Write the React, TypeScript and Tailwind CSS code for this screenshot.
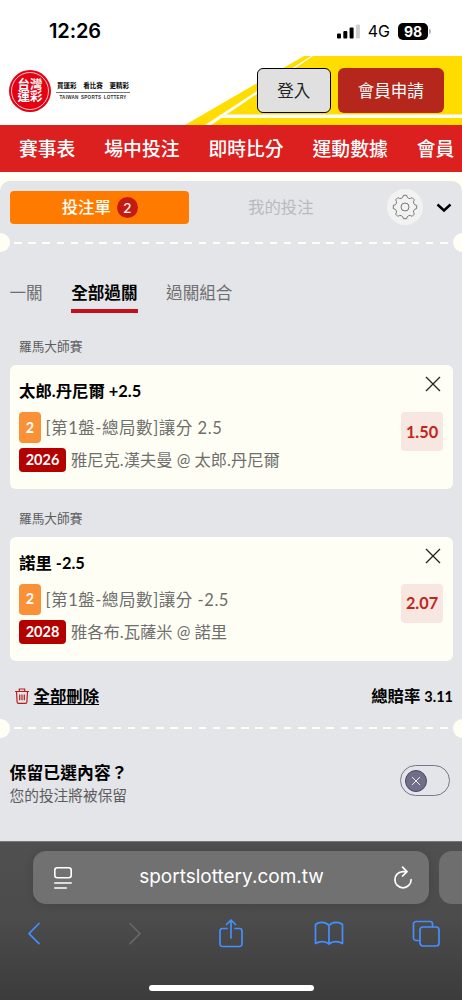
import type { ReactNode } from 'react'

type Bet = {
  league: string
  title: string
  count: string
  market: string
  code: string
  match: string
  odds: string
}

const NAV_ITEMS = ['賽事表', '場中投注', '即時比分', '運動數據', '會員']

const BETS: Bet[] = [
  {
    league: '羅馬大師賽',
    title: '太郎.丹尼爾 +2.5',
    count: '2',
    market: '[第1盤-總局數]讓分 2.5',
    code: '2026',
    match: '雅尼克.漢夫曼 @ 太郎.丹尼爾',
    odds: '1.50',
  },
  {
    league: '羅馬大師賽',
    title: '諾里 -2.5',
    count: '2',
    market: '[第1盤-總局數]讓分 -2.5',
    code: '2028',
    match: '雅各布.瓦薩米 @ 諾里',
    odds: '2.07',
  },
]

function StatusBar() {
  return (
    <div className="flex h-14 items-start justify-between bg-white pl-[49px] pr-[31px] pt-[19px] font-['Inter'] text-black">
      <span className="text-[20px] font-semibold leading-6 tracking-[-0.1px]">12:26</span>
      <div className="flex h-6 items-center">
        <svg width="24" height="15" viewBox="0 0 24 15">
          <rect x="0" y="9.5" width="4" height="5" rx="1" />
          <rect x="6.3" y="7" width="4" height="7.5" rx="1" />
          <rect x="12.6" y="3.5" width="4" height="11" rx="1" />
          <rect x="18.9" y="0.5" width="4" height="14" rx="1" fill="#cfcfcf" />
        </svg>
        <span className="ml-[7px] text-[16px] leading-6">4G</span>
        <span className="ml-[8px] flex h-[17px] w-[30px] items-center justify-center rounded-[5px] bg-black text-[14px] font-bold text-white">
          98
        </span>
        <span className="ml-px h-[5px] w-[2px] rounded-r-full bg-[#b5b5b5]" />
      </div>
    </div>
  )
}

function Logo() {
  return (
    <div className="flex items-center">
      <div className="flex size-[42px] items-center justify-center rounded-full bg-[#e60012]">
        <div className="flex size-[38px] items-center justify-center rounded-full border border-white/80">
          <span className="w-[26px] text-center text-[12.5px] font-bold leading-[12.5px] text-white">
            台灣
            <br />
            運彩
          </span>
        </div>
      </div>
      <div className="ml-[5px] w-[74px]">
        <div className="flex justify-between whitespace-nowrap px-px text-[6.5px] font-bold leading-[10px] text-black">
          <span>買運彩</span>
          <span>看比賽</span>
          <span>更精彩</span>
        </div>
        <div className="mt-px border-t border-[#777] pt-px text-center font-['Liberation_Sans'] text-[4.6px] font-bold leading-[7px] tracking-[0.22px] whitespace-nowrap text-[#333] [word-spacing:1px]">
          TAIWAN SPORTS LOTTERY
        </div>
      </div>
    </div>
  )
}

function Header() {
  return (
    <header className="relative flex h-[69px] items-start justify-between bg-white pl-[9px] pr-[18px] pt-[12px]">
      <svg className="absolute inset-0" width="462" height="69" viewBox="0 0 462 69">
        <path d="M304 0H462V69H185Z" fill="#ffdd00" />
        <path d="M311 0h2L211 69h-6Z" fill="#fff" />
        <path d="M227 58.5H462V62H221Z" fill="#fff" />
      </svg>
      <div className="relative mt-[2px]">
        <Logo />
      </div>
      <div className="relative flex gap-[7px] text-[16.5px]">
        <button className="h-[45px] w-[73.5px] rounded-[6px] border border-black bg-[#e0e0e0] pt-[2px] text-[#222]">登入</button>
        <button className="h-[45px] w-[106.5px] rounded-[6px] bg-[#b5261c] pt-[2px] text-white">會員申請</button>
      </div>
    </header>
  )
}

function TicketDivider() {
  return (
    <div className="flex h-[19px] items-center justify-between overflow-hidden">
      <span className="-ml-[9.5px] size-[19px] shrink-0 rounded-full bg-[#fffef5]" />
      <span className="mx-[4.5px] h-[2px] grow bg-[repeating-linear-gradient(90deg,#fffef5_0,#fffef5_7.6px,transparent_7.6px,transparent_14.2px)]" />
      <span className="-mr-[9.5px] size-[19px] shrink-0 rounded-full bg-[#fffef5]" />
    </div>
  )
}

function GearIcon() {
  return (
    <svg width="26" height="26" viewBox="0 0 26 26" fill="none" stroke="#777" strokeWidth="1">
      <path
        strokeLinejoin="round"
        d="M11.350 1.300L14.650 1.300A3.200 3.200 0 0 0 20.100 3.600L22.400 5.900A3.200 3.200 0 0 0 24.700 11.350L24.700 14.650A3.200 3.200 0 0 0 22.400 20.100L20.100 22.400A3.200 3.200 0 0 0 14.650 24.700L11.350 24.700A3.200 3.200 0 0 0 5.900 22.400L3.600 20.100A3.200 3.200 0 0 0 1.300 14.650L1.300 11.350A3.200 3.200 0 0 0 3.600 5.900L5.900 3.600A3.200 3.200 0 0 0 11.350 1.300Z"
      />
      <circle cx="13" cy="13" r="4" />
    </svg>
  )
}

function BetCard({ bet }: { bet: Bet }) {
  return (
    <section>
      <h3 className="pl-[19px] text-[12.7px] leading-[18px] text-[#5c5c5e]">{bet.league}</h3>
      <div className="ml-[9.5px] mr-[9.5px] mt-[10px] flex h-[124px] justify-between rounded-[6px] bg-[#fffef5] px-[9.5px] pt-[14px]">
        <div>
          <div className="text-[16.4px] font-bold leading-[24px] text-black">{bet.title}</div>
          <div className="mt-[9px] flex items-center">
            <span className="flex h-[31px] w-[22px] items-center justify-center rounded-[4px] bg-[#fa9137] text-[14.5px] font-bold text-white">
              {bet.count}
            </span>
            <span className="ml-[4.5px] pt-[2px] text-[16.5px] tracking-[0.55px] text-[#6e6e6c]">{bet.market}</span>
          </div>
          <div className="mt-[5px] flex items-center">
            <span className="flex h-[24px] w-[47px] items-center justify-center rounded-[4px] bg-[#b50000] text-[14.5px] font-bold text-white">
              {bet.code}
            </span>
            <span className="ml-[5px] text-[16.3px] leading-6 text-[#6e6e6c]">{bet.match}</span>
          </div>
        </div>
        <div className="flex flex-col items-end">
          <svg className="mt-[-3px] mr-[2px]" width="16" height="16" viewBox="0 0 16 16" stroke="#222" strokeWidth="1.3">
            <path d="M1 1l14 14M15 1L1 15" />
          </svg>
          <span className="mt-[20px] flex h-[39px] w-[42px] items-center justify-center rounded-[4px] bg-[#f8e6e0] pt-px text-[16.3px] font-bold text-[#bf271c]">
            {bet.odds}
          </span>
        </div>
      </div>
    </section>
  )
}

function BetSlip() {
  return (
    <main className="bg-[#fffef5] pt-[9px]">
      <div className="h-[660px] rounded-t-[10px] bg-[#e4e5e8]">
        <div className="flex h-[52px] items-center pl-[9.5px]">
          <button className="flex h-[33px] w-[179.5px] items-center justify-center rounded-[4px] bg-[#ff7b00] pl-px text-[16.4px] font-medium text-[#fffef5]">
            <span className="pt-px">投注單</span>
            <span className="ml-[6px] flex size-[21px] items-center justify-center rounded-full bg-[#c41a10] text-[14px]">
              2
            </span>
          </button>
          <span className="ml-[59px] pt-px text-[16.4px] text-[#b9babc]">我的投注</span>
          <span className="ml-[73px] flex size-[36px] items-center justify-center rounded-full bg-[#f2f2f2]">
            <GearIcon />
          </span>
          <svg className="ml-[13px] mt-px" width="16" height="10" viewBox="0 0 16 10" fill="none" stroke="#000" strokeWidth="2.4">
            <path d="M1.5 1.5L8 7.5l6.5-6" />
          </svg>
        </div>
        <TicketDivider />

        <div className="mt-[29px] flex pl-[9.5px] text-[16.6px] leading-6 text-[#6e6e70]">
          <span>一關</span>
          <span className="ml-[28.5px] h-[32px] border-b-[4px] border-[#c4101a] font-bold text-black">全部過關</span>
          <span className="ml-[28.5px]">過關組合</span>
        </div>

        <div className="mt-[24px] flex flex-col gap-[19.5px]">
          {BETS.map((bet) => (
            <BetCard key={bet.code} bet={bet} />
          ))}
        </div>

        <div className="mt-[23px] flex items-center justify-between pl-[15px] pr-[9px] text-[16.4px] font-bold leading-6 text-black">
          <div className="flex items-center">
            <svg width="14" height="16" viewBox="0 0 14 16" fill="none" stroke="#b91c1c" strokeWidth="1.2">
              <path d="M0 3.5h14M4.300 3.500V1h5.400v2.500M1.500 3.500l.6 10.200c0 .9.6 1.600 1.500 1.600h6.800c.9 0 1.500-.7 1.500-1.600l.6-10.200M4.700 6.500v5.700M7 6.500v5.700M9.300 6.500v5.700" />
            </svg>
            <span className="ml-[4.5px] underline decoration-1 underline-offset-[2px]">全部刪除</span>
          </div>
          <div>
            總賠率 <span className="text-[14.5px]">3.11</span>
          </div>
        </div>

        <div className="mt-[10px]">
          <TicketDivider />
        </div>

        <div className="mt-[23.5px] flex justify-between pl-[9.5px] pr-[12px]">
          <div>
            <div className="text-[16.8px] font-bold leading-[24px] tracking-[0.1px] text-black">保留已選內容？</div>
            <div className="text-[14.7px] leading-[20px] text-[#5c5c5e]">您的投注將被保留</div>
          </div>
          <div className="mt-[4px] flex h-[31px] w-[50px] items-center rounded-full border border-[#77758e] pl-[4px]">
            <span className="flex size-[22px] items-center justify-center rounded-full border border-[#45436a] bg-[#706f87]">
              <svg width="10" height="10" viewBox="0 0 10 10" stroke="#eee" strokeWidth="1">
                <path d="M1 1l8 8M9 1L1 9" />
              </svg>
            </span>
          </div>
        </div>
      </div>
    </main>
  )
}

function ToolIcon({ w, color = '#448fff', children }: { w: number; color?: string; children: ReactNode }) {
  return (
    <svg
      width={w}
      height="30"
      viewBox={`0 0 ${w} 30`}
      fill="none"
      stroke={color}
      strokeWidth="1.7"
      strokeLinecap="round"
      strokeLinejoin="round"
    >
      {children}
    </svg>
  )
}

function BrowserBar() {
  return (
    <footer className="flex h-[159px] flex-col overflow-hidden border-t border-[#777] bg-linear-to-b from-[#505050] via-[#4b4b4b] to-[#3c3c3c] pt-[9px]">
      <div className="flex gap-[10px] pl-[33px]">
        <div className="flex h-[53px] w-[396px] shrink-0 items-center justify-between rounded-[13px] bg-[#717171] pl-[20px] pr-[16px] shadow-[0_0_10px_rgba(0,0,0,0.12)]">
          <svg width="20" height="24" viewBox="0 0 20 24" fill="none" stroke="#fff" strokeWidth="1.6" strokeLinecap="round">
            <rect x="1.8" y="1.8" width="16.4" height="10" rx="2.5" />
            <path d="M1.800 17h16.400M1.800 22h11.500" />
          </svg>
          <span className="mr-[3px] font-['Inter'] text-[19px] text-white">sportslottery.com.tw</span>
          <svg width="20" height="24" viewBox="0 0 20 24" fill="none" stroke="#fff" strokeWidth="1.7" strokeLinecap="round" strokeLinejoin="round">
            <path d="M13 5.600H10A8.100 8.100 0 1 0 18.100 13.700M9.600 1.200L14 5.600 9.600 10" />
          </svg>
        </div>
        <div className="h-[53px] w-[50px] shrink-0 rounded-[13px] bg-[#6e6e6e]" />
      </div>
      <div className="mt-[14px] flex pl-[27px]">
        <ToolIcon w={14}>
          <path d="M12 5.500L2 15.700l10 10" />
        </ToolIcon>
        <div className="ml-[87px]">
          <ToolIcon w={14} color="#666">
            <path d="M2 5.500l10 10.200L2 25.700" />
          </ToolIcon>
        </div>
        <div className="ml-[76px]">
          <ToolIcon w={26}>
            <path d="M9 10.500H4.500a2.500 2.500 0 0 0-2.500 2.500v13a2.500 2.500 0 0 0 2.500 2.500h17a2.500 2.500 0 0 0 2.500-2.500V13a2.500 2.500 0 0 0-2.500-2.500H17M13 20V2M8.500 6.500L13 2l4.500 4.500" />
          </ToolIcon>
        </div>
        <div className="ml-[70px]">
          <ToolIcon w={30}>
            <path d="M15 7.500C11.500 3.500 5 3.500 1.500 6.500V25.500C5.500 23 11.500 23 15 26C18.500 23 24.500 23 28.500 25.500V6.500C25 3.500 18.500 3.500 15 7.500V26" />
          </ToolIcon>
        </div>
        <div className="ml-[68px]">
          <ToolIcon w={28}>
            <rect x="8" y="9" width="19" height="19" rx="3" />
            <path d="M7.500 22.500H4a2.500 2.500 0 0 1-2.500-2.500V6A2.500 2.500 0 0 1 4 3.500h14A2.500 2.500 0 0 1 20.500 6V8.500" />
          </ToolIcon>
        </div>
      </div>
      <div className="mx-auto mt-[37px] h-[6px] w-[165px] rounded-full bg-white" />
    </footer>
  )
}

export default function App() {
  return (
    <div lang="zh-TW" className="h-[1000px] w-[462px] overflow-hidden bg-white font-['Lato','Noto_Sans_CJK_TC',sans-serif]">
      <StatusBar />
      <Header />
      <nav className="flex h-[47px] items-center gap-[29px] overflow-hidden bg-[#dc1f1f] pl-[19px] pt-px text-[18.8px] font-medium whitespace-nowrap text-white">
        {NAV_ITEMS.map((item) => (
          <span key={item}>{item}</span>
        ))}
      </nav>
      <BetSlip />
      <BrowserBar />
    </div>
  )
}
